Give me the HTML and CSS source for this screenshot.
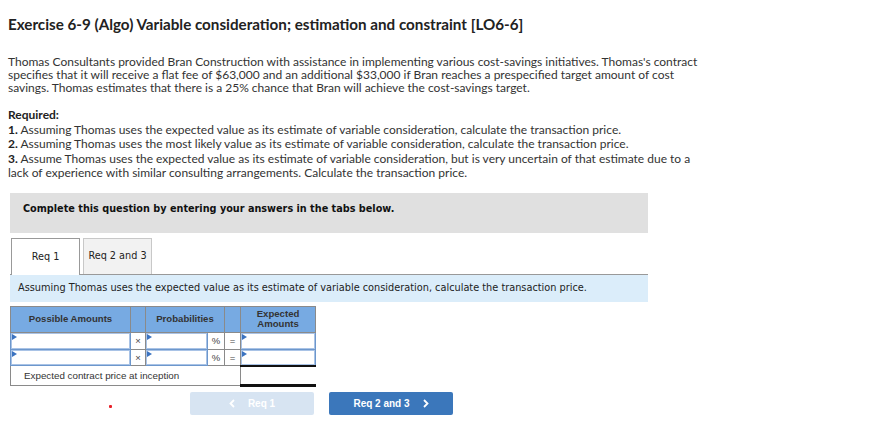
FILE: index.html
```html
<!DOCTYPE html>
<html>
<head>
<meta charset="utf-8">
<link rel="stylesheet" href="styles.css">
</head>
<body>
<div class="page">
  <h1 class="title">Exercise 6-9 (Algo) Variable consideration; estimation and constraint [LO6-6]</h1>
  <p class="intro">Thomas Consultants provided Bran Construction with assistance in implementing various cost-savings initiatives. Thomas's contract specifies that it will receive a flat fee of $63,000 and an additional $33,000 if Bran reaches a prespecified target amount of cost savings. Thomas estimates that there is a 25% chance that Bran will achieve the cost-savings target.</p>
  <div class="required">
    <div class="req-head">Required:</div>
    <div><b>1.</b> Assuming Thomas uses the expected value as its estimate of variable consideration, calculate the transaction price.</div>
    <div><b>2.</b> Assuming Thomas uses the most likely value as its estimate of variable consideration, calculate the transaction price.</div>
    <div><b>3.</b> <span>Assume Thomas uses the expected value as its estimate of variable consideration, but is very uncertain of that estimate due to a</span><br><span>lack of experience with similar consulting arrangements. Calculate the transaction price.</span></div>
  </div>

  <div class="question">
    <div class="banner">Complete this question by entering your answers in the tabs below.</div>
    <div class="tabs">
      <div class="tab active">Req 1</div>
      <div class="tab">Req 2 and 3</div>
    </div>
    <div class="info">Assuming Thomas uses the expected value as its estimate of variable consideration, calculate the transaction price.</div>

    <table class="grid">
      <colgroup>
        <col class="c1"><col class="c2"><col class="c3"><col class="c4"><col class="c5"><col class="c6">
      </colgroup>
      <tr class="hrow">
        <th>Possible Amounts</th>
        <th></th>
        <th colspan="2">Probabilities</th>
        <th></th>
        <th>Expected<br>Amounts</th>
      </tr>
      <tr class="r1">
        <td class="in"><span class="flag"></span></td>
        <td class="op">×</td>
        <td class="in"><span class="flag"></span></td>
        <td class="op">%</td>
        <td class="op">=</td>
        <td class="in"><span class="flag"></span></td>
      </tr>
      <tr class="r2">
        <td class="in"><span class="flag"></span></td>
        <td class="op">×</td>
        <td class="in"><span class="flag"></span></td>
        <td class="op">%</td>
        <td class="op">=</td>
        <td class="in"><span class="flag"></span></td>
      </tr>
      <tr class="r3">
        <td colspan="5" class="label">Expected contract price at inception</td>
        <td class="total"></td>
      </tr>
    </table>

    <div class="nav">
      <span class="dot"></span>
      <button class="btn prev"><svg class="chev" width="6" height="9" viewBox="0 0 6 9"><polyline points="5,1 1.5,4.5 5,8" fill="none" stroke="#fff" stroke-width="1.8"/></svg><span class="lbl">Req 1</span></button>
      <button class="btn next"><span class="lbl">Req 2 and 3</span><svg class="chev" width="6" height="9" viewBox="0 0 6 9"><polyline points="1,1 4.5,4.5 1,8" fill="none" stroke="#fff" stroke-width="1.8"/></svg></button>
    </div>
  </div>
</div>
</body>
</html>
```

FILE: styles.css
```css
html, body {
  margin: 0;
  padding: 0;
  background: #fff;
}
.page {
  padding: 0 8px;
  font-family: "Lato", "Liberation Sans", sans-serif;
  color: #333;
}
.title {
  margin: 0;
  padding-top: 16px;
  font-size: 15.2px;
  line-height: 17px;
  font-weight: 700;
  color: #222;
}
.intro {
  margin: 0;
  padding-top: 22px;
  font-size: 12px;
  line-height: 13px;
  width: 700px;
}
.required {
  padding-top: 14px;
  font-size: 12px;
  line-height: 14.5px;
  width: 700px;
}
.req-head {
  font-weight: 700;
  color: #222;
}
.required b {
  color: #222;
}
.question {
  margin-left: 2px;
  width: 638px;
  padding-top: 12px;
}
.banner {
  background: #e0e0e0;
  height: 40px;
  box-sizing: border-box;
  padding: 10px 0 0 13px;
  font-family: "DejaVu Sans", Verdana, sans-serif;
  font-weight: 700;
  font-size: 9.7px;
  color: #111;
}
.tabs {
  display: flex;
  gap: 3px;
  margin-top: 5px;
  padding-left: 1px;
  border-bottom: 1px solid #999;
  height: 36px;
}
.tab {
  width: 69px;
  box-sizing: border-box;
  height: 36px;
  border: 1px solid #c8c8c8;
  border-bottom: none;
  background: #f2f2f2;
  font-family: "DejaVu Sans", Verdana, sans-serif;
  font-size: 9.7px;
  color: #222;
  display: flex;
  align-items: center;
  justify-content: center;
  padding-bottom: 1px;
}
.tab.active {
  background: #fff;
  border-color: #999;
  height: 37px;
  position: relative;
  z-index: 1;
}
.info {
  background: #dbedfa;
  height: 27px;
  box-sizing: border-box;
  padding: 7px 0 0 8px;
  font-family: "DejaVu Sans", Verdana, sans-serif;
  font-size: 9.75px;
  color: #222;
}
.grid {
  margin-top: 4px;
  border-collapse: collapse;
  table-layout: fixed;
  width: 305px;
  font-family: "Liberation Sans", Arial, sans-serif;
}
.c1 { width: 120px; }
.c2 { width: 15px; }
.c3 { width: 62px; }
.c4 { width: 17px; }
.c5 { width: 16px; }
.c6 { width: 75px; }
.grid th {
  background: #77aae2;
  border: 1px solid #8a8a8a;
  height: 25px;
  padding: 0;
  font-size: 9.6px;
  font-weight: 700;
  color: #333;
  line-height: 10px;
}
.grid td {
  border: 1px solid #8a8a8a;
  padding: 0;
  font-size: 9.5px;
  color: #333;
}
.r1 td { height: 16px; }
.r2 td { height: 15px; }
.r3 td { height: 17px; }
.grid td.in {
  border: 1px solid #6d97cc;
  box-shadow: inset 0 0 0 1px #a9c3e6;
  position: relative;
  background: #fff;
}
.flag {
  position: absolute;
  left: 1px;
  top: 1px;
  width: 0;
  height: 0;
  border-top: 3px solid transparent;
  border-bottom: 3px solid transparent;
  border-left: 5px solid #3b73c0;
}
.grid td.op {
  text-align: center;
  font-size: 9.5px;
  color: #444;
}
.grid td.label {
  padding-left: 13px;
  color: #333;
  font-size: 9.8px;
}
.grid td.total {
  border-top: 2px solid #111;
  border-bottom: 3px solid #111;
  border-right: 1px solid #fff;
}
.nav {
  display: flex;
  align-items: center;
  margin-top: 5px;
  height: 23px;
}
.dot {
  width: 3px;
  height: 3px;
  background: #e8212a;
  border-radius: 1px;
  margin-left: 99px;
  margin-top: 6px;
}
.btn {
  height: 23px;
  width: 124px;
  border: none;
  border-radius: 2px;
  font-family: "Liberation Sans", Arial, sans-serif;
  font-weight: 700;
  font-size: 10px;
  color: #fff;
  padding: 0;
  display: flex;
  align-items: center;
  justify-content: center;
  gap: 13px;
}
.prev {
  background: #d7e4f2;
  margin-left: 78px;
}
.next {
  background: #3b77bb;
  margin-left: 15px;
}
.chev {
  display: block;
}
```
